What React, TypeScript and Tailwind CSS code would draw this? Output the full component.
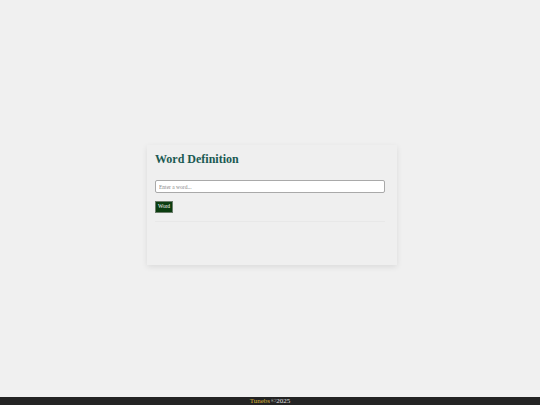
import React from "react";

export default function App() {
  return (
    <div className="flex h-[405px] w-full flex-col bg-[#f0f0f0]" style={{ fontFamily: '"Liberation Serif", "Times New Roman", serif' }}>
      <main className="flex flex-1 justify-center pt-[145px]">
        <div className="ml-[4px] h-[120px] w-[250px] bg-[#efefef] px-[8px] pt-[7px] shadow-[0_2px_6px_rgba(0,0,0,0.09)]">
          <h1 className="text-[12px] font-bold leading-[14px] text-[#1b5a52]">Word Definition</h1>
          <input
            type="text"
            placeholder="Enter a word..."
            className="mt-[14px] block h-[13px] w-[230px] rounded-[2px] border border-[#a9a9a9] bg-white px-[3px] text-[5.5px] text-[#333] placeholder:text-[#888] outline-none"
          />
          <button className="mt-[8px] block h-[12px] w-[18px] border border-[#6b7d6b] bg-[#0b3d10] text-[5.5px] leading-none text-white">
            Word
          </button>
          <div className="mt-[8px] h-px w-[230px] bg-[#e8e8e8]" />
        </div>
      </main>
      <footer className="flex h-[8px] items-center justify-center bg-[#232323] text-[7px] leading-none">
        <span className="text-[#d9b23a]">Tunebs</span>
        <span className="ml-[1px] text-[#e0e0e0]">©2025</span>
      </footer>
    </div>
  );
}
